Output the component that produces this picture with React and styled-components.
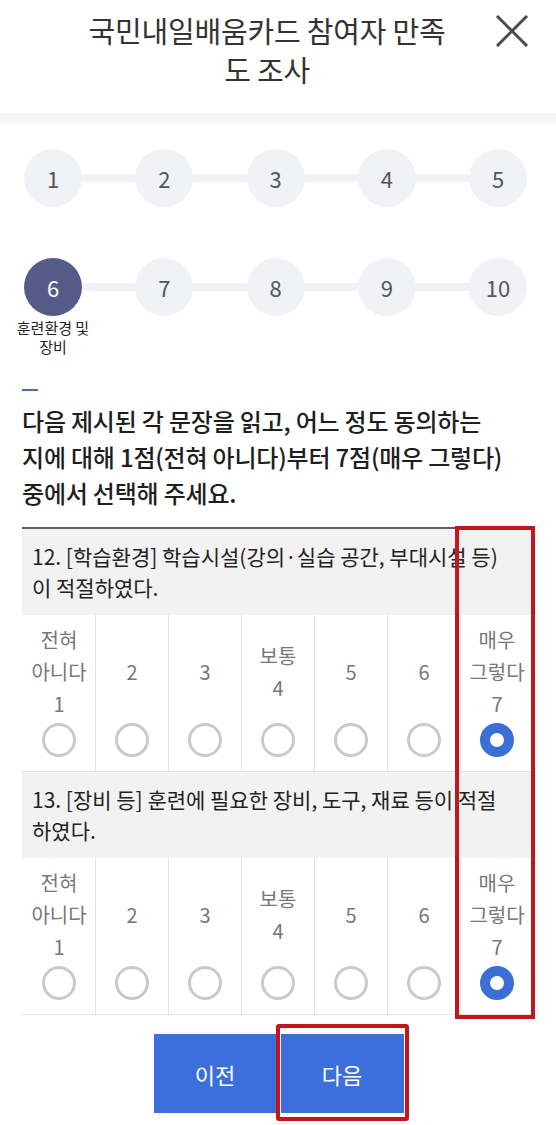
import React from "react";
import styled, { createGlobalStyle } from "styled-components";

const GlobalStyle = createGlobalStyle`
  body {
    margin: 0;
    background: #fff;
    font-family: "Noto Sans CJK KR", "Noto Sans", sans-serif;
    color: #222;
  }
`;

const Page = styled.div`
  width: 556px;
  padding-bottom: 13px;
`;

const Header = styled.header`
  display: flex;
  align-items: flex-start;
  height: 113px;
  box-sizing: border-box;
  padding: 11px 26px 0 40px;
`;

const Title = styled.h1`
  flex: 1;
  margin: 0;
  text-align: center;
  font-size: 29px;
  line-height: 39px;
  font-weight: 400;
  color: #333;
  letter-spacing: -0.2px;
`;

const CloseButton = styled.button`
  border: none;
  background: none;
  padding: 0;
  margin-top: 2px;
  width: 36px;
  height: 36px;
  display: flex;
  align-items: center;
  justify-content: center;
`;

const Band = styled.div`
  height: 11px;
  background: #f6f6f7;
`;

const Steps = styled.div`
  display: flex;
  flex-direction: column;
  gap: 51px;
  padding: 25px 29px 0 24px;
`;

const StepRow = styled.div`
  position: relative;
  display: flex;
  justify-content: space-between;
  align-items: flex-start;

  &::before {
    content: "";
    position: absolute;
    left: 29px;
    right: 29px;
    top: 25px;
    height: 8px;
    background: #f1f2f6;
  }
`;

const Step = styled.div`
  position: relative;
  width: 58px;
  display: flex;
  flex-direction: column;
  align-items: center;
`;

const Circle = styled.div`
  width: 58px;
  height: 58px;
  border-radius: 50%;
  display: flex;
  align-items: center;
  justify-content: center;
  font-size: 22px;
  background: ${(p) => (p.$active ? "#535b86" : "#f1f2f6")};
  color: ${(p) => (p.$active ? "#fff" : "#555")};
`;

const StepLabel = styled.div`
  margin-top: 2px;
  white-space: nowrap;
  text-align: center;
  font-size: 15px;
  line-height: 19px;
  color: #222;
`;

const Body = styled.div`
  padding: 33px 23px 0 22px;
`;

const Dash = styled.div`
  width: 16px;
  height: 2px;
  background: #4c6aa6;
`;

const Instruction = styled.p`
  margin: 12px 0 16px;
  font-size: 24px;
  line-height: 36px;
  font-weight: 500;
  letter-spacing: -0.2px;
  color: #1e1e1e;
`;

const Table = styled.div`
  position: relative;
  border-top: 2px solid #5e5e5e;
`;

const Question = styled.div`
  background: #f2f2f2;
  padding: 12px 10px;
  font-size: 21px;
  line-height: 31px;
  color: #222;
`;

const Options = styled.div`
  display: grid;
  grid-template-columns: repeat(7, 1fr);
  border-bottom: 1px solid #e2e2e2;
`;

const Option = styled.label`
  display: flex;
  flex-direction: column;
  align-items: center;
  padding: 9px 0 14px;
  border-left: 1px solid ${(p) => (p.$first ? "transparent" : "#e4e4e4")};
`;

const OptionText = styled.div`
  height: 96px;
  display: flex;
  align-items: center;
  justify-content: center;
  text-align: center;
  font-size: 20px;
  line-height: 32px;
  color: #777;
`;

const Radio = styled.span`
  margin-top: 3px;
  box-sizing: border-box;
  width: 34px;
  height: 34px;
  border-radius: 50%;
  border: ${(p) => (p.$checked ? "10px solid #3b6fd5" : "3px solid #cacaca")};
  background: #fff;
`;

const Highlight = styled.div`
  position: absolute;
  top: -3px;
  right: -2px;
  bottom: -4px;
  width: 80px;
  border: 4px solid #c3161c;
  box-sizing: border-box;
`;

const Buttons = styled.div`
  display: flex;
  justify-content: center;
  gap: 4px;
  margin-top: 19px;
  padding-left: 2px;
`;

const NavWrap = styled.div`
  position: relative;
`;

const NavButton = styled.button`
  width: 123px;
  height: 79px;
  border: none;
  background: #3c6fdb;
  color: #fff;
  font-family: inherit;
  font-size: 22px;
`;

const ButtonHighlight = styled.div`
  position: absolute;
  inset: -10px -5px -8px -5px;
  border: 4px solid #c3161c;
  border-radius: 3px;
`;

const labels = [
  ["전혀", "아니다", "1"],
  ["2"],
  ["3"],
  ["보통", "4"],
  ["5"],
  ["6"],
  ["매우", "그렇다", "7"],
];

const questions = [
  ["12. [학습환경] 학습시설(강의·실습 공간, 부대시설 등)", "이 적절하였다."],
  ["13. [장비 등] 훈련에 필요한 장비, 도구, 재료 등이 적절", "하였다."],
];

const CloseIcon = () => (
  <svg width="34" height="32" viewBox="0 0 34 32">
    <path d="M2 1 L32 31 M32 1 L2 31" stroke="#4a4a4f" strokeWidth="3" fill="none" />
  </svg>
);

const App = () => {
  return (
    <Page>
      <GlobalStyle />
      <Header>
        <Title>
          국민내일배움카드 참여자 만족
          <br />도 조사
        </Title>
        <CloseButton aria-label="닫기">
          <CloseIcon />
        </CloseButton>
      </Header>
      <Band />
      <Steps>
        <StepRow>
          {[1, 2, 3, 4, 5].map((n) => (
            <Step key={n}>
              <Circle>{n}</Circle>
            </Step>
          ))}
        </StepRow>
        <StepRow>
          {[6, 7, 8, 9, 10].map((n) => (
            <Step key={n}>
              <Circle $active={n === 6}>{n}</Circle>
              {n === 6 && (
                <StepLabel>
                  훈련환경 및<br />장비
                </StepLabel>
              )}
            </Step>
          ))}
        </StepRow>
      </Steps>
      <Body>
        <Dash />
        <Instruction>
          다음 제시된 각 문장을 읽고, 어느 정도 동의하는
          <br />
          지에 대해 1점(전혀 아니다)부터 7점(매우 그렇다)
          <br />
          중에서 선택해 주세요.
        </Instruction>
        <Table>
          {questions.map((q, qi) => (
            <div key={qi}>
              <Question>
                {q[0]}
                <br />
                {q[1]}
              </Question>
              <Options>
                {labels.map((l, i) => (
                  <Option key={i} $first={i === 0}>
                    <OptionText>
                      <div>
                        {l.map((t, j) => (
                          <div key={j}>{t}</div>
                        ))}
                      </div>
                    </OptionText>
                    <Radio $checked={i === 6} />
                  </Option>
                ))}
              </Options>
            </div>
          ))}
          <Highlight />
        </Table>
        <Buttons>
          <NavButton>이전</NavButton>
          <NavWrap>
            <NavButton>다음</NavButton>
            <ButtonHighlight />
          </NavWrap>
        </Buttons>
      </Body>
    </Page>
  );
};

export default App;
